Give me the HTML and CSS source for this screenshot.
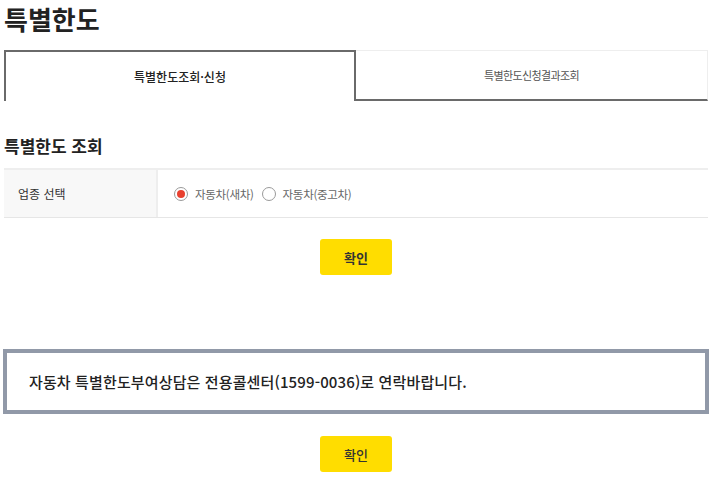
FILE: index.html
```html
<!DOCTYPE html>
<html lang="ko">
<head>
<meta charset="utf-8">
<link rel="stylesheet" href="styles.css">
</head>
<body>
<div class="page">
  <h1 class="title">특별한도</h1>
  <div class="tabs">
    <div class="tab active">특별한도조회·신청</div>
    <div class="tab">특별한도신청결과조회</div>
  </div>
  <h2 class="section">특별한도 조회</h2>
  <div class="form-row">
    <div class="label">업종 선택</div>
    <div class="field">
      <label class="radio"><span class="dot checked"></span><span>자동차(새차)</span></label>
      <label class="radio"><span class="dot"></span><span>자동차(중고차)</span></label>
    </div>
  </div>
  <div class="btn-wrap first"><button class="btn">확인</button></div>
  <div class="notice">자동차 특별한도부여상담은 전용콜센터(1599-0036)로 연락바랍니다.</div>
  <div class="btn-wrap second"><button class="btn light">확인</button></div>
</div>
</body>
</html>
```
FILE: styles.css
```css
html, body {
  margin: 0;
  padding: 0;
  background: #fff;
}
body {
  font-family: "Noto Sans CJK KR", "Noto Sans", sans-serif;
  color: #222;
}
.page {
  width: 704px;
  margin-left: 4px;
}
.title {
  margin: 0;
  font-size: 26px;
  line-height: 38px;
  font-weight: 700;
  color: #222;
}
.tabs {
  display: flex;
  margin-top: 12px;
  height: 51px;
}
.tab {
  flex: 1;
  display: flex;
  align-items: center;
  justify-content: center;
  font-size: 11px;
  letter-spacing: -0.6px;
  color: #555;
  box-sizing: border-box;
  border-top: 1px solid #eee;
  border-right: 1px solid #eee;
  border-bottom: 2px solid #6a6a6a;
}
.tab.active {
  flex: 0 0 352px;
  border: 2px solid #6a6a6a;
  border-bottom: none;
  color: #222;
  font-size: 12px;
  letter-spacing: 0;
  font-weight: 500;
}
.section {
  margin: 32px 0 0;
  font-size: 17px;
  line-height: 26px;
  font-weight: 700;
  color: #222;
}
.form-row {
  display: flex;
  margin-top: 9px;
  height: 47px;
  border-top: 2px solid #eee;
  border-bottom: 1px solid #e6e6e6;
}
.label {
  width: 154px;
  background: #f8f8f8;
  border-right: 2px solid #eee;
  display: flex;
  align-items: center;
  padding-left: 14px;
  box-sizing: border-box;
  font-size: 12px;
  color: #333;
}
.field {
  display: flex;
  align-items: center;
  padding-left: 16px;
  gap: 8px;
}
.radio {
  display: flex;
  align-items: center;
  gap: 7px;
  font-size: 11.5px;
  letter-spacing: -0.3px;
  color: #666;
}
.dot {
  width: 14px;
  height: 14px;
  box-sizing: border-box;
  border: 1px solid #9a9a9a;
  border-radius: 50%;
  display: flex;
  align-items: center;
  justify-content: center;
}
.dot.checked::after {
  content: "";
  width: 8px;
  height: 8px;
  border-radius: 50%;
  background: #e8402f;
}
.btn-wrap {
  display: flex;
  justify-content: center;
}
.btn-wrap.first {
  margin-top: 21px;
}
.btn-wrap.second {
  margin-top: 22px;
}
.btn {
  width: 72px;
  height: 36px;
  background: #ffdd00;
  border: none;
  border-radius: 3px;
  font-family: inherit;
  font-size: 13px;
  font-weight: 700;
  color: #333;
  padding: 0;
}
.btn.light {
  font-weight: 500;
}
.notice {
  margin: 74px 0 0 -1px;
  width: 706px;
  height: 65px;
  box-sizing: border-box;
  border: 4px solid #9199a8;
  display: flex;
  align-items: center;
  padding-left: 22px;
  font-size: 15px;
  letter-spacing: 0.13px;
  font-weight: 500;
  color: #222;
}
```
